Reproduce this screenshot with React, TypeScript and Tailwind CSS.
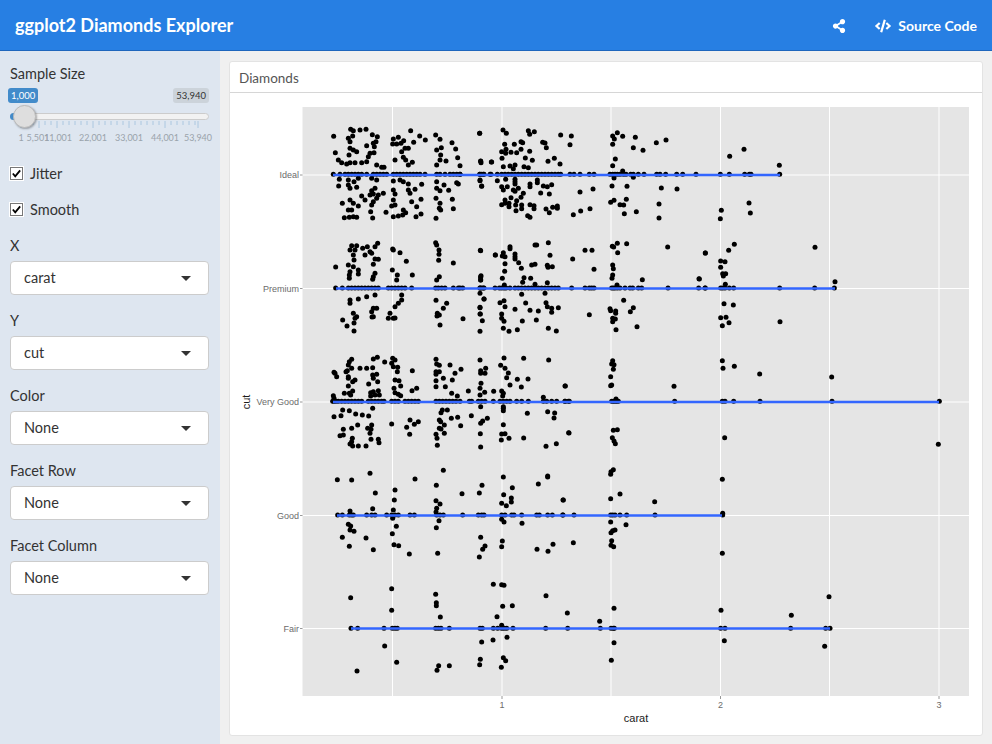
import { FaCode, FaShareAlt } from "react-icons/fa"

type Pt = [number, number]

// reads point lists at 3x from a crop origin, so values stay close to what was measured
const at = (ox: number, oy: number, pts: Pt[]): Pt[] => pts.map(([x, y]) => [ox + x / 3, oy + y / 3])
const row = (ox: number, oy: number, y: number, xs: number[]): Pt[] => xs.map((x) => [ox + x / 3, oy + y / 3])

const points: Pt[] = [
  // Ideal + Premium, right side
  ...at(700, 110, [[132,118],[89,139],[238,166],[147,279],[64,301],[151,309],[61,326],[345,412],[103,403],[86,421],[16,429],[62,453],[75,455],[62,472],[68,491],[77,491],[70,498],[-2,507],[76,523],[405,515],[72,581],[100,585],[62,623],[78,622],[87,638],[67,647],[240,635]]),
  ...row(700, 110, 193, [61,88,134,148,153,239]),
  ...row(700, 110, 534, [15,62,68,75,88,101,239,344,403]),
  // Ideal, middle
  ...at(460, 110, [[59,70],[129,60],[139,70],[205,62],[223,65],[209,73],[302,75],[334,78],[330,104],[134,103],[163,103],[183,95],[188,98],[248,97],[255,99],[259,113],[125,125],[138,118],[137,130],[153,127],[170,128],[183,118],[209,124],[126,145],[196,144],[217,151],[283,145],[264,154],[300,162],[62,153],[63,158],[95,156],[130,170],[150,168],[165,165],[160,176],[205,173],[192,170],[60,212],[65,229],[112,212],[137,208],[165,208],[165,215],[165,222],[210,222],[210,230],[232,210],[232,218],[125,230],[130,240],[142,230],[160,240],[165,244],[175,235],[190,250],[183,262],[242,249],[250,228],[262,230],[275,224],[268,252],[153,263],[135,270],[125,284],[135,280],[147,280],[147,290],[170,272],[167,285],[185,285],[185,296],[168,302],[210,284],[222,287],[222,296],[258,297],[268,308],[278,292],[292,288],[292,295],[203,317],[210,322],[340,314],[362,303],[390,296],[360,246],[399,237],[458,78],[472,68],[463,87],[488,79],[526,82],[458,103],[520,113],[549,121],[589,98],[618,90],[466,147],[458,167],[488,183],[462,204],[520,202],[456,228],[501,229],[604,234],[651,237],[452,277],[462,271],[499,268],[480,284],[491,285],[597,282],[493,311],[529,305],[597,324]]),
  ...row(460, 110, 193, [0,59,65,72,93,112,125,135,145,155,165,175,185,195,205,215,225,235,245,255,265,275,285,295,302,330,342,360,388,402,450,458,465,472,480,490,498,512,520,535,552,590,600,617,650,668,708]),
  // Premium, middle
  ...at(460, 110, [[61,421],[150,410],[150,416],[130,428],[106,435],[127,438],[135,440],[165,432],[165,440],[165,447],[225,405],[230,405],[265,398],[270,436],[176,458],[135,461],[215,465],[225,463],[262,466],[264,472],[277,470],[338,447],[375,421],[396,421],[402,478],[134,484],[184,475],[63,497],[62,503],[62,510],[127,505],[192,503],[212,505],[188,517],[262,518],[133,525],[225,523],[457,409],[461,411],[472,400],[500,401],[473,428],[623,411],[736,429],[458,465],[460,476],[458,495],[456,505],[547,509],[717,506],[471,525],[60,550],[72,567],[185,553],[255,550],[120,578],[132,572],[135,590],[197,579],[258,578],[262,590],[275,595],[295,593],[60,593],[61,612],[67,632],[9,626],[125,612],[125,625],[132,634],[165,598],[210,601],[235,603],[275,607],[187,633],[229,630],[388,614],[130,655],[147,664],[172,659],[60,664],[265,655],[289,663],[491,571],[520,593],[511,605],[450,596],[452,602],[467,603],[467,610],[458,625],[466,627],[458,635],[468,659],[531,650]]),
  ...row(460, 110, 534, [0,60,65,72,105,118,125,132,138,150,165,175,185,195,205,215,225,235,245,255,265,275,285,295,335,375,388,395,402,455,460,465,472,480,495,510,518,535,545,624,716,736]),
  // Ideal + Premium, left side
  ...at(230, 100, [[311,109],[362,88],[370,92],[390,90],[408,88],[427,104],[442,110],[355,115],[368,108],[360,125],[438,125],[430,130],[410,137],[433,140],[542,92],[521,122],[505,112],[490,117],[488,132],[500,132],[551,127],[569,108],[586,120],[617,105],[630,118],[666,128],[677,147],[634,143],[620,150],[632,165],[683,173],[648,183],[630,180],[620,195],[690,197],[749,100],[752,184],[784,186],[316,158],[360,145],[370,150],[380,155],[357,165],[420,160],[432,158],[415,170],[325,180],[335,188],[350,192],[360,188],[375,188],[395,188],[410,185],[440,195],[455,202],[462,202],[495,180],[515,155],[525,145],[535,145],[520,172],[527,180],[535,195],[547,187],[513,130],[328,238],[326,258],[355,240],[355,255],[372,245],[385,235],[360,265],[380,262],[425,235],[440,240],[490,243],[510,240],[520,245],[535,252],[575,253],[620,245],[642,255],[680,248],[685,252],[620,265],[630,272],[656,271],[750,240],[755,258],[490,270],[495,282],[435,265],[425,272],[430,282],[420,285],[395,288],[405,300],[360,300],[370,310],[337,310],[385,318],[445,285],[460,280],[440,295],[430,305],[425,315],[535,270],[555,268],[540,280],[490,300],[495,315],[485,318],[520,330],[545,305],[560,320],[573,298],[618,295],[630,310],[628,325],[632,330],[667,298],[670,326],[355,330],[365,330],[343,353],[358,352],[370,350],[380,352],[428,354],[422,335],[468,337],[490,350],[505,348],[518,345],[527,338],[558,350],[573,342],[618,355],[443,430],[365,437],[380,437],[412,440],[398,445],[435,440],[360,450],[375,450],[420,455],[425,460],[405,465],[370,465],[435,477],[445,478],[372,480],[430,493],[317,501],[355,495],[370,500],[385,510],[360,515],[385,522],[358,525],[358,535],[435,520],[430,530],[428,538],[488,447],[510,458],[529,484],[490,450],[487,510],[502,525],[547,525],[500,540],[617,428],[620,435],[627,450],[627,463],[626,481],[670,489],[628,530],[620,540],[752,452],[796,465],[752,530],[752,540],[360,600],[385,597],[410,590],[435,585],[360,610],[370,640],[380,650],[430,625],[440,625],[425,635],[430,650],[515,585],[515,600],[505,610],[495,620],[618,601],[650,610],[640,625],[622,640],[628,645],[762,597],[750,622],[750,642],[480,640],[490,655],[475,655],[338,660],[375,655]]),
  ...row(230, 100, 223, [310,330,345,355,365,375,385,395,410,430,440,450,460,470,490,500,510,520,530,540,550,560,570,585,620,630,645,660,670,680,690,750,760,780]),
  ...row(230, 100, 564, [317,337,355,365,375,385,395,405,415,425,435,445,475,485,495,505,515,525,545,617,625,635,645,670,685,698,750,760]),
  [347,326],[354,323],[354,331],[372,317],[395,318],[440,325],[437,316],
  // Very Good + Good, left side
  ...at(310, 340, [[72,97],[75,100],[80,110],[125,58],[118,65],[115,75],[125,85],[112,92],[108,95],[150,85],[170,85],[190,57],[202,52],[188,83],[224,66],[248,55],[255,60],[245,70],[250,80],[263,82],[262,95],[307,92],[115,110],[115,115],[135,120],[128,125],[115,138],[188,105],[200,103],[190,115],[203,125],[176,132],[255,120],[267,122],[272,138],[252,145],[320,145],[306,152],[378,58],[380,72],[388,76],[420,75],[453,88],[435,100],[378,95],[388,95],[378,103],[378,122],[400,115],[427,120],[378,140],[406,140],[510,60],[527,85],[512,92],[525,100],[512,100],[582,54],[641,55],[716,60],[572,76],[585,85],[595,99],[590,113],[622,118],[654,117],[634,141],[600,135],[513,130],[510,145],[766,138],[103,160],[118,160],[128,153],[122,165],[70,167],[72,175],[190,155],[182,158],[205,152],[195,165],[182,168],[208,165],[255,158],[265,163],[272,167],[425,160],[442,168],[475,153],[510,165],[524,157],[551,154],[575,153],[580,160],[578,168],[700,172],[188,205],[98,210],[118,212],[137,222],[157,225],[176,228],[72,230],[93,227],[143,255],[125,265],[100,268],[100,285],[90,287],[173,265],[185,255],[183,268],[180,280],[183,298],[205,298],[207,308],[127,295],[125,305],[120,312],[128,318],[145,318],[168,318],[245,252],[300,240],[325,245],[313,253],[290,262],[299,283],[397,210],[393,218],[412,210],[424,235],[443,232],[388,240],[392,245],[403,255],[452,257],[388,265],[393,267],[403,280],[378,283],[381,295],[382,316],[512,200],[484,227],[532,235],[518,243],[512,250],[580,200],[580,212],[580,205],[652,220],[713,215],[734,219],[732,234],[580,254],[575,282],[585,281],[511,281],[597,295],[574,300],[641,294],[512,321],[708,319],[739,311],[776,278],[82,419],[125,420],[180,400],[315,417],[400,391],[379,436],[255,450],[196,459],[253,480],[188,506],[250,510],[378,482],[390,492],[380,505],[378,516],[456,461],[516,436],[508,459],[580,411],[607,443],[581,464],[604,474],[604,486],[575,490],[589,497],[685,432],[713,408],[713,411],[759,480],[120,513],[248,535],[115,553],[122,558],[120,570],[132,574],[259,559],[247,581],[387,542],[379,563],[97,592],[168,594],[118,619],[190,629],[252,614],[266,617],[298,642],[383,640],[512,592],[525,618],[518,628],[508,651],[575,538],[582,546],[636,550],[577,603],[575,620],[681,628],[714,634],[729,613]]),
  ...row(310, 340, 184, [68,72,78,85,95,105,115,125,135,145,155,175,185,195,205,215,222,245,255,265,285,295,305,315,325,378,388,398,408,418,428,438,450,478,485,505,515,525,550,570,580,590,600,620,635,655,700,710,725,740,765,775]),
  ...row(310, 340, 525, [83,97,118,125,130,170,185,195,230,245,255,265,300,313,380,390,400,458,505,515,522,575,585,605,612,635,680,688,713,727,759]),
  // Very Good + Good, right side
  ...at(560, 340, [[158,62],[155,72],[162,74],[160,88],[152,110],[155,135],[152,137],[15,138],[342,139],[487,62],[489,85],[523,79],[599,102],[815,111],[168,177],[27,279],[160,271],[172,269],[157,293],[162,303],[166,311],[494,293],[1135,313],[160,389],[153,395],[152,403],[487,418],[180,462],[152,476],[284,485],[10,480],[488,520],[152,546],[198,554],[165,570],[158,572],[153,578],[40,608],[155,602],[153,616],[161,620],[487,640]]),
  ...row(560, 340, 184, [15,28,155,160,165,170,175,344,487,495,521,600,816,1138]),
  ...row(560, 340, 525, [8,42,152,158,165,180,200,285,488]),
  // Fair
  ...at(230, 560, [[362,113],[485,86],[485,151],[617,103],[619,128],[619,137],[631,171],[790,73],[815,74],[822,76],[818,139],[847,137],[801,170],[815,196],[755,246],[789,240],[831,232],[464,258],[500,307],[381,333],[626,317],[621,331],[658,317],[751,298],[749,314],[820,293],[827,302],[814,322]]),
  ...row(230, 560, 205, [363,383,462,487,495,502,617,625,633,658,750,757,790,803,815,822,830,849]),
  ...at(480, 570, [[198,77],[262,129],[359,154],[402,115],[723,121],[934,136],[1047,80],[402,218],[733,212],[394,271],[1034,229]]),
  ...row(480, 570, 175, [197,263,361,393,400,403,722,735,932,1037,1050]),
]

const cuts = [
  { label: "Ideal", y: 175, from: 333, to: 780 },
  { label: "Premium", y: 288.5, from: 336, to: 835 },
  { label: "Very Good", y: 402, from: 333, to: 939 },
  { label: "Good", y: 515.5, from: 337, to: 722 },
  { label: "Fair", y: 628.5, from: 351, to: 830 },
]

const vGrid = [392.5, 502, 611, 720.5, 829.5, 939]
const xTicks = [
  { label: "1", x: 502 },
  { label: "2", x: 720.5 },
  { label: "3", x: 939 },
]

function Plot() {
  return (
    <svg viewBox="230 93 752 642" className="block w-full h-[642px]" fontFamily="'Liberation Sans', sans-serif">
      <rect x="302.5" y="107" width="666.5" height="589" fill="#e5e5e5" />
      {vGrid.map((x) => (
        <line key={x} x1={x} x2={x} y1="107" y2="696" stroke="#fff" strokeWidth="1" />
      ))}
      {cuts.map((c) => (
        <g key={c.label}>
          <line x1="302.5" x2="969" y1={c.y} y2={c.y} stroke="#fff" strokeWidth="1.2" />
          <line x1="300" x2="302.5" y1={c.y} y2={c.y} stroke="#7f7f7f" strokeWidth="0.8" />
          <text x="299" y={c.y + 3} textAnchor="end" fontSize="9" fill="#6b6b6b">
            {c.label}
          </text>
        </g>
      ))}
      {xTicks.map((t) => (
        <g key={t.label}>
          <line x1={t.x} x2={t.x} y1="696" y2="699" stroke="#7f7f7f" strokeWidth="0.8" />
          <text x={t.x} y="708" textAnchor="middle" fontSize="9" fill="#6b6b6b">
            {t.label}
          </text>
        </g>
      ))}
      {points.map(([x, y], i) => (
        <circle key={i} cx={x} cy={y} r="2.5" fill="#000" />
      ))}
      {cuts.map((c) => (
        <line key={c.label} x1={c.from} x2={c.to} y1={c.y} y2={c.y} stroke="#3366ff" strokeWidth="2.5" />
      ))}
      <text x="636" y="722" textAnchor="middle" fontSize="11" fill="#1a1a1a">
        carat
      </text>
      <text transform="translate(250 402) rotate(-90)" textAnchor="middle" fontSize="11" fill="#1a1a1a">
        cut
      </text>
    </svg>
  )
}

function SelectField({ label, value }: { label: string; value: string }) {
  return (
    <div className="mb-[15px]">
      <div className="h-[21px] mb-[5px] text-[14.5px] leading-[21px] text-[#333]">{label}</div>
      <div className="flex items-center justify-between h-[34px] pl-[13px] pr-[17px] bg-white border border-[#ccc] rounded-[4px] text-[14.5px] text-[#333]">
        <span>{value}</span>
        <span className="w-0 h-0 border-x-[5px] border-x-transparent border-t-[5px] border-t-[#333]" />
      </div>
    </div>
  )
}

function CheckField({ label }: { label: string }) {
  return (
    <div className="flex items-center h-[21px] mb-[15px] text-[14.5px] text-[#333]">
      <span className="flex items-center justify-center w-[13px] h-[13px] mr-[7px] bg-white border border-[#777] outline outline-1 outline-white">
        <svg viewBox="0 0 12 12" className="w-[11px] h-[11px]">
          <path d="M2 6l2.6 3L10 2.5" fill="none" stroke="#000" strokeWidth="2" />
        </svg>
      </span>
      {label}
    </div>
  )
}

// left offsets are relative to the sidebar's content box
const sliderLabels = [
  { t: "1", x: 11 },
  { t: "5,501", x: 28 },
  { t: "11,001", x: 48 },
  { t: "22,001", x: 83 },
  { t: "33,001", x: 119 },
  { t: "44,001", x: 155 },
  { t: "53,940", x: 188 },
]
const majorTicks = [0, 3, 6, 12, 18, 24, 30]

function SampleSlider() {
  return (
    <div className="mb-[19px]">
      <div className="h-[21px] pt-[1px] text-[14.5px] leading-[21px] text-[#333]">Sample Size</div>
      <div className="flex justify-between items-center h-[15px] mt-[5px] -ml-[2px] text-[9.5px]">
        <span className="px-[3px] leading-[15px] rounded-[3px] bg-[#428bca] text-white">1,000</span>
        <span className="px-[3px] leading-[15px] rounded-[3px] bg-[#ccd3da] text-[#333]">53,940</span>
      </div>
      <div className="relative h-[7px] mt-[10px] rounded-[4px] bg-[#f2f2f2] border border-[#ccc]">
        <span className="absolute -left-px -top-px w-[12px] h-[7px] rounded-l-[4px] bg-[#428bca]" />
        <span className="absolute left-[2px] -top-[9px] w-[23px] h-[23px] rounded-full bg-[#dedede] border border-[#bbb] shadow-[1px_1px_2px_rgba(0,0,0,0.3)]" />
      </div>
      <svg viewBox="0 0 200 9" className="block w-[200px] h-[9px] mt-[1px]">
        {Array.from({ length: 31 }, (_, i) => {
          const x = i === 30 ? 188 : 11 + i * 6
          return <line key={i} x1={x} x2={x} y1="0" y2={majorTicks.includes(i) ? 7 : 4} stroke="#9fbfdc" strokeWidth="0.8" />
        })}
      </svg>
      <div className="relative h-[12px] mt-[2px] text-[9px] leading-[12px] text-[#9aa3ab]">
        {sliderLabels.map((l) => (
          <span key={l.t} className="absolute -translate-x-1/2" style={{ left: l.x }}>
            {l.t}
          </span>
        ))}
      </div>
    </div>
  )
}

export default function App() {
  return (
    <div className="flex flex-col w-[992px] h-[744px] overflow-hidden bg-[#f0f0f0] font-['Lato',sans-serif]">
      <header className="flex items-center justify-between h-[51px] shrink-0 pl-[15px] pr-[15px] bg-[#277fe3] border-b border-[#1e66bd] text-white">
        <span className="pt-[1px] text-[18px] font-bold">ggplot2 Diamonds Explorer</span>
        <div className="flex items-center pt-[1px] text-[14px] font-bold">
          <FaShareAlt className="w-[14px] h-[14px] mr-[29px]" />
          <FaCode className="w-[16px] h-[16px] mr-[7px]" />
          <span>Source Code</span>
        </div>
      </header>

      <div className="flex flex-1 min-h-0">
        <aside className="w-[220px] shrink-0 pt-[11px] pl-[10px] pr-[11px] bg-[#dee6f0]">
          <SampleSlider />
          <CheckField label="Jitter" />
          <CheckField label="Smooth" />
          <SelectField label="X" value="carat" />
          <SelectField label="Y" value="cut" />
          <SelectField label="Color" value="None" />
          <SelectField label="Facet Row" value="None" />
          <SelectField label="Facet Column" value="None" />
        </aside>

        <main className="flex-1 min-w-0 pt-[10px] pl-[9px] pr-[9px]">
          <section className="h-[675px] bg-white border border-[#e3e3e3] rounded-[3px] overflow-hidden">
            <div className="flex items-center h-[31px] pl-[9px] pt-[3px] border-b border-[#d6d6d6] text-[13.5px] text-[#555]">
              Diamonds
            </div>
            <Plot />
          </section>
        </main>
      </div>
    </div>
  )
}
